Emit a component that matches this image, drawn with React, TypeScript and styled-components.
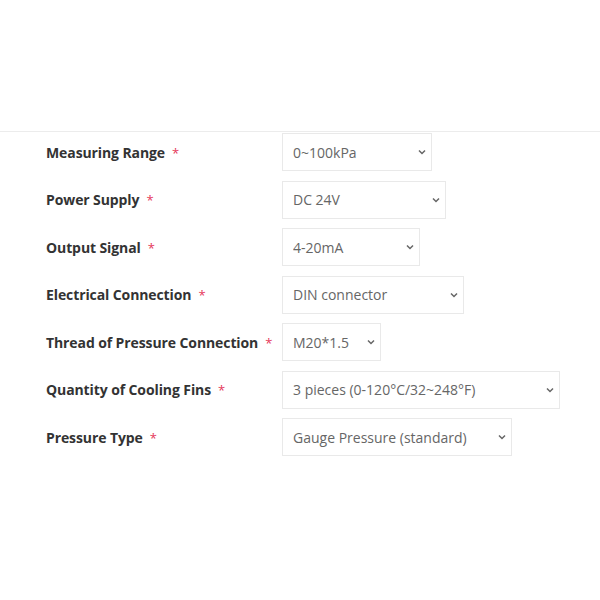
import React from 'react';
import styled, { createGlobalStyle } from 'styled-components';

const GlobalStyle = createGlobalStyle`
  html, body {
    margin: 0;
    padding: 0;
    background: #fff;
    font-family: 'Open Sans', 'Liberation Sans', sans-serif;
  }
`;

const Page = styled.div`
  padding-top: 131px;
`;

const Form = styled.form`
  border-top: 1px solid #ececec;
  padding: 1px 0 0 46px;
  display: grid;
  grid-template-columns: 236px auto;
  row-gap: 9.5px;
  align-items: center;
`;

const Label = styled.label`
  font-size: 14px;
  font-weight: 700;
  color: #333;
  letter-spacing: -0.1px;
`;

const Star = styled.span`
  color: #e5375a;
  font-weight: 400;
  margin-left: 7px;
  font-size: 13px;
`;

const SelectWrap = styled.div<{ $w: number }>`
  position: relative;
  width: ${(p) => p.$w}px;
  height: 38px;
`;

const Select = styled.select`
  appearance: none;
  -webkit-appearance: none;
  width: 100%;
  height: 100%;
  box-sizing: border-box;
  border: 1px solid #e9e9e9;
  border-radius: 0;
  background: #fff;
  padding: 0 28px 0 10px;
  font-family: 'Open Sans', 'Liberation Sans', sans-serif;
  font-size: 14px;
  color: #666;
  outline: none;
`;

const Chevron = styled.svg`
  position: absolute;
  right: 5px;
  top: 15px;
  width: 10px;
  height: 8px;
  pointer-events: none;
`;

const fields = [
  { label: 'Measuring Range', value: '0~100kPa', w: 150 },
  { label: 'Power Supply', value: 'DC 24V', w: 164 },
  { label: 'Output Signal', value: '4-20mA', w: 138 },
  { label: 'Electrical Connection', value: 'DIN connector', w: 182 },
  { label: 'Thread of Pressure Connection', value: 'M20*1.5', w: 99 },
  { label: 'Quantity of Cooling Fins', value: '3 pieces (0-120°C/32~248°F)', w: 278 },
  { label: 'Pressure Type', value: 'Gauge Pressure (standard)', w: 230 },
];

export default function App() {
  return (
    <Page>
      <GlobalStyle />
      <Form>
        {fields.map((f) => (
          <React.Fragment key={f.label}>
            <Label>
              {f.label}
              <Star>*</Star>
            </Label>
            <SelectWrap $w={f.w}>
              <Select defaultValue={f.value}>
                <option>{f.value}</option>
              </Select>
              <Chevron viewBox="0 0 10 8">
                <path d="M2 2.5 L5 5.5 L8 2.5" fill="none" stroke="#666" strokeWidth="1.5" />
              </Chevron>
            </SelectWrap>
          </React.Fragment>
        ))}
      </Form>
    </Page>
  );
}
